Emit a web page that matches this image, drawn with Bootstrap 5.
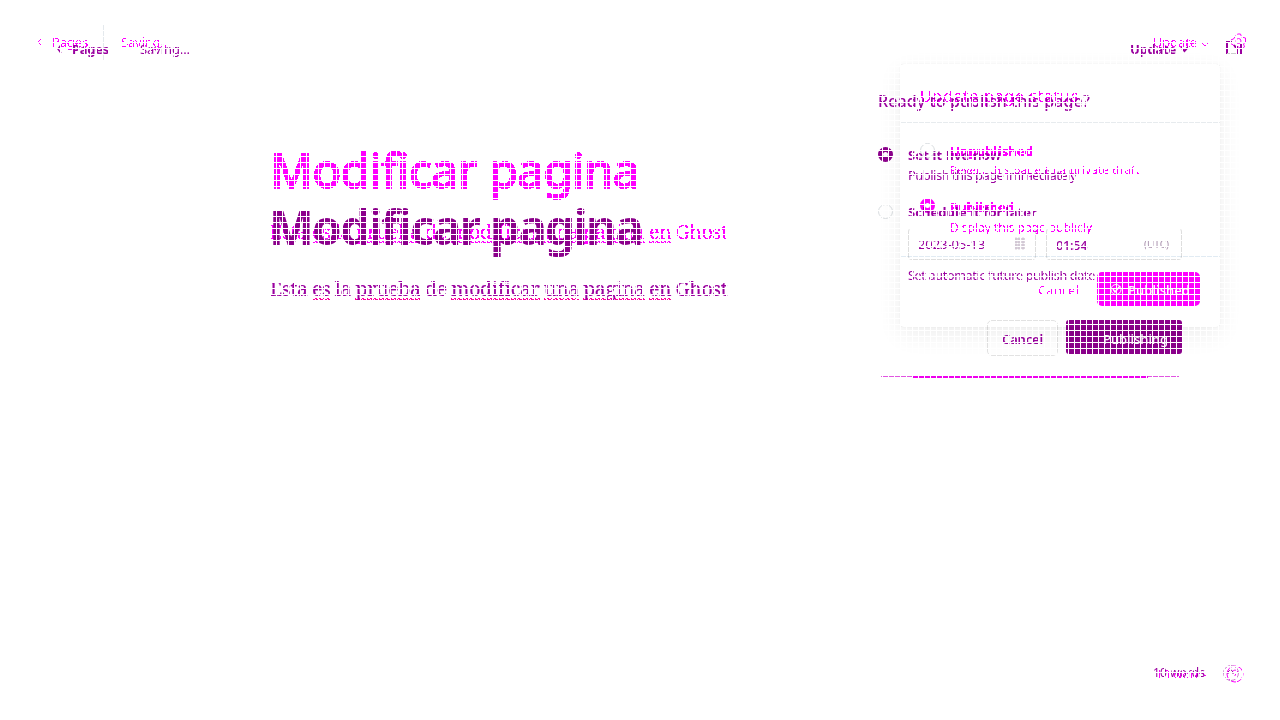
<!DOCTYPE html>
<html lang="es">
<head>
<meta charset="utf-8">
<meta name="viewport" content="width=device-width, initial-scale=1">
<title>Modificar pagina</title>
<link href="https://cdn.jsdelivr.net/npm/bootstrap@5.3.0/dist/css/bootstrap.min.css" rel="stylesheet">
<style>
:root{--a:#ff00ff;--b:#8b008b;--t:#9a009f}
body{font-family:"Noto Sans","Open Sans",sans-serif;background:#fff;overflow:hidden}
.stage{width:1280px;height:720px}
.sheet{inset:0;font-size:13px;line-height:20px;mix-blend-mode:multiply}
.sheet svg{fill:none;stroke:currentColor;display:block;flex:none}
.first{color:var(--a)} .second{color:var(--t)}
.crisp{filter:url(#crisp)}
.first .bar{height:60px;padding:32px 34px 8px 37px}
.second .bar{height:60px;padding:39px 38px 0 56px}
.rule-v{width:1px;height:35px;background:#e4e9ed;margin-top:-7px}
[data-w]{white-space:nowrap;display:inline-block}
.write{margin-left:270px;width:520px}
.title{font-size:47.5px;line-height:56px;margin:0 0 0 -1px}
.first .title{-webkit-text-stroke:1.9px currentColor;margin-left:0}
.prose{font-family:"Noto Serif","DejaVu Serif",serif;line-height:28px;margin:0;font-size:19.5px;word-spacing:-.6px;-webkit-text-stroke:.15px currentColor}
.wav{background:repeating-linear-gradient(90deg,currentColor 0 3px,transparent 3px 4px) 0 calc(100% - 2px)/100% 1px no-repeat,repeating-linear-gradient(90deg,currentColor 0 1px,transparent 1px 3px,currentColor 3px 4px) 0 calc(100% - 3px)/100% 1px no-repeat}
.second .wav{background-image:repeating-linear-gradient(90deg,#ff00a0 0 3px,transparent 3px 4px),repeating-linear-gradient(90deg,#ff00a0 0 1px,transparent 1px 3px,#ff00a0 3px 4px)}
.pop{width:320px;height:263px;left:900px;top:64px;border-radius:4px;box-shadow:0 0 1px rgba(0,0,0,.18),0 8px 24px rgba(0,0,0,.07)}
.pop-head{height:59px;padding:22px 20px 0;border-bottom:1px solid #e7ebee}
.pop-body{height:134px;padding:20px 20px 0;border-bottom:1px solid #e1ebf3}
.opt{height:56px;gap:15px}
.opt b{-webkit-text-stroke:.3px currentColor}
.tick{width:15px;height:15px;border-radius:50%;flex:none}
.tick.on{border:5px solid currentColor}
.tick.off{border:1px solid #d8dcdf}
.go-a{width:103px;height:34px;border-radius:5px;background:var(--a);color:#fff}
.sched{left:878px;top:91px;width:304px}
.sched .field{height:32px;border:1px solid #dedede;border-top-color:transparent;border-radius:4px;padding:6px 9px}
.btn-no{width:71px;height:36px;border:1px solid #e2e2e2;border-radius:5px}
.go-b{width:116px;height:34px;border-radius:3px;background:var(--b);color:#fff;margin-bottom:2px}
.foot{right:36px;bottom:35px}
.foot2{right:40px;bottom:37px}
.mesh{inset:0;background:linear-gradient(90deg,#fff 1px,transparent 1px) 0 0/6px 6px,linear-gradient(#fff 1px,transparent 1px) 0 0/6px 6px;pointer-events:none}
</style>
</head>
<body>
<svg class="position-absolute" width="0" height="0"><filter id="crisp" x="-5%" y="-20%" width="110%" height="140%" color-interpolation-filters="sRGB"><feComponentTransfer><feFuncA type="discrete" tableValues="0 1"/></feComponentTransfer></filter></svg>
<main class="stage position-relative overflow-hidden">
<section class="sheet first position-absolute">
  <header class="bar d-flex align-items-start">
    <svg style="margin-top:6px" width="5" height="8"><path d="M4 1 1 4l3 3"/></svg>
    <span class="crisp" style="margin-left:10px" data-w="36">Pages</span>
    <i class="rule-v" style="margin-left:15px"></i>
    <span class="crisp" style="margin-left:17px" data-w="49">Saving...</span>
    <span class="crisp ms-auto" data-w="44">Update</span>
    <svg style="margin:10px 21px 0 4px" width="8" height="6"><path d="m1 1 3 3 3-3"/></svg>
    <svg style="margin-top:1px;margin-right:-1px" width="17" height="17" viewBox="0 0 16 17"><path d="M5 3 7 1h3l1 3 4 1v4l-2 2 1 3-3 2-3-2-3 1-2-3-4-2 1-3 3-1z"/><circle cx="8" cy="8" r="2.5"/></svg>
  </header>
  <div class="write" style="padding-top:82px">
    <h1 class="title fw-normal crisp" data-w="369">Modificar pagina</h1>
    <p class="prose crisp" style="margin-top:20px" data-w="457">Esta <span class="wav">es</span> la <span class="wav">prueba</span> de <span class="wav">modificar</span> <span class="wav">una</span> <span class="wav">pagina</span> <span class="wav">en</span> Ghost</p>
  </div>
  <aside class="pop position-absolute">
    <div class="pop-head"><span class="crisp" style="font-size:16px" data-w="159">Update page status</span></div>
    <div class="pop-body">
      <div class="opt d-flex"><i class="tick off"></i><div style="margin-top:-2px"><b class="d-block crisp" data-w="83">Unpublished</b><span class="crisp" style="font-size:11px;line-height:18px;vertical-align:top" data-w="190">Revert this page to a private draft</span></div></div>
      <div class="opt d-flex"><i class="tick on" style="margin-top:-1px"></i><div style="margin-top:-2px"><b class="d-block crisp" data-w="64">Published</b><span class="crisp" style="font-size:12px;vertical-align:top;margin-top:1px" data-w="142">Display this page publicly</span></div></div>
    </div>
    <div class="d-flex justify-content-end align-items-center" style="padding:15px 20px 0 0"><span class="crisp" style="margin-right:18px;padding-top:2px" data-w="41">Cancel</span><div class="go-a d-flex align-items-center" style="padding-left:13px"><svg width="12" height="13"><circle cx="6" cy="6.5" r="5"/><path d="m3 6 2 3 5-6" stroke-width="1.5"/></svg><span class="fw-medium" style="margin:2px 0 0 6px" data-w="62">Published</span></div></div>
  </aside>
  <div class="foot position-absolute d-flex align-items-center"><span class="crisp" style="margin-right:18px;font-size:12px;padding-top:3px" data-w="52">10 words</span><svg width="18" height="18"><circle cx="9" cy="9" r="8"/><path d="M6 7q3-4 6 0l-3 3v1"/></svg></div>
</section>
<section class="sheet second position-absolute">
  <header class="bar d-flex align-items-start">
    <svg class="mt-1" width="7" height="11"><path d="M5 2 2 6l3 4" stroke-width="1.5"/></svg>
    <span class="fw-bold" style="margin-left:9px" data-w="37">Pages</span>
    <span style="margin-left:31px" data-w="50">Saving...</span>
    <span class="ms-auto fw-bold" data-w="46">Update</span>
    <svg style="margin:7px 37px 0 4px" width="9" height="7"><path d="m1 1 3.5 4L8 1" stroke-width="2"/></svg>
    <svg style="margin-top:2px" width="16" height="14"><path d="M1 13V1h5" stroke-width="2"/><path d="M1 12.5h10" stroke="#ccc"/><path d="M11 5v8M15 3v10M8 4l3 4" stroke-width="2"/></svg>
  </header>
  <div class="write" style="padding-top:139px">
    <h2 class="title fw-bold" style="color:var(--b)" data-w="373">Modificar pagina</h2>
    <p class="prose" style="margin-top:20px" data-w="457">Esta <span class="wav">es</span> la <span class="wav">prueba</span> de <span class="wav">modificar</span> <span class="wav">una</span> <span class="wav">pagina</span> <span class="wav">en</span> Ghost</p>
  </div>
  <div class="sched position-absolute">
    <div style="font-size:16px;font-weight:500" data-w="212">Ready to publish this page?</div>
    <div class="d-flex" style="gap:15px;margin-top:28px;height:57px"><i class="tick on" style="margin-top:7px;color:var(--b)"></i><div style="margin-top:5px"><span class="fw-bold" data-w="93">Set it live now</span><br><span data-w="168">Publish this page immediately</span></div></div>
    <div class="d-flex" style="gap:15px"><i class="tick off" style="margin-top:7px"></i><div style="margin-top:5px"><span class="fw-bold" data-w="129">Schedule it for later</span></div></div>
    <div style="padding-left:30px;margin-top:6px">
      <div class="d-flex" style="gap:10px"><div class="field d-flex justify-content-between" style="width:128px"><span style="margin-top:-1px" data-w="67">2023-05-13</span><svg width="12" height="14" style="color:#b9a9bc;margin-top:2px"><path d="M1 2h10M1 5h10M1 8h10M1 11h10"/><path d="M2 0v13M5 0v13M9 0v13" stroke-opacity=".5"/></svg></div><div class="field d-flex justify-content-between" style="width:136px"><span class="fw-medium" data-w="31">01:54</span><span style="font-size:10px;color:#a990ad;line-height:18px;margin-right:3px" data-w="25">(UTC)</span></div></div>
      <div style="margin-top:6px;font-size:12.5px" data-w="187">Set automatic future publish date</div>
    </div>
    <div class="d-flex justify-content-end align-items-center" style="margin-top:34px;gap:8px"><div class="btn-no d-flex align-items-center justify-content-center fw-semibold"><span style="padding-top:2px" data-w="41">Cancel</span></div><div class="go-b d-flex align-items-center" style="padding-left:14px"><svg width="14" height="14" style="color:#b000b0"><circle cx="7" cy="7" r="6" stroke-dasharray="3 3"/></svg><span class="fw-medium" style="margin:3px 0 0 9px" data-w="65">Publishing</span></div></div>
    <div class="d-flex" style="margin:20px 3px 0"><i style="width:31px;height:1px;background:#e055e0"></i><i style="width:236px;height:2px;background:#ee00ee"></i><i style="width:31px;height:1px;background:#e055e0"></i></div>
  </div>
  <div class="foot2 position-absolute d-flex align-items-center"><span style="margin-right:18px;font-size:12px" data-w="52">10 words</span><svg width="17" height="17"><circle cx="8" cy="8" r="7.5" stroke-opacity=".5"/><path d="M5 9V7q3-4 5 0v2"/></svg></div>
</section>
<div class="mesh position-absolute"></div>
</main>
<script src="https://cdn.jsdelivr.net/npm/bootstrap@5.3.0/dist/js/bootstrap.bundle.min.js"></script>
<script>
// Track each label out to its set measure.
document.querySelectorAll('[data-w]').forEach(function(el){
  var r=document.createRange();r.selectNodeContents(el);
  var w=r.getBoundingClientRect().width,n=el.textContent.length;
  el.style.letterSpacing=((el.dataset.w-w)/n).toFixed(3)+'px';
  if(getComputedStyle(el).display==='block')el.style.width=el.dataset.w+'px';
});
</script>
</body>
</html>
